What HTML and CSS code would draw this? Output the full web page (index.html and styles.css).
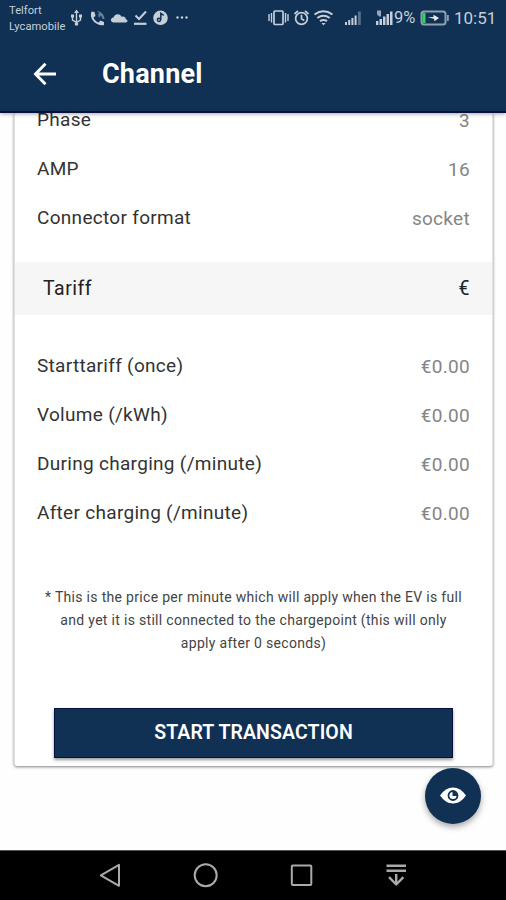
FILE: index.html
```html
<!DOCTYPE html>
<html lang="en">
<head>
<meta charset="utf-8">
<title>Channel</title>
<link rel="stylesheet" href="styles.css">
</head>
<body>
<div class="screen">
  <header class="top">
    <div class="status">
      <div class="carrier"><span>Telfort</span><span class="carrier-second">Lycamobile</span></div>
      <svg class="notifications" width="122" height="20" viewBox="0 0 122 20">
        <g fill="none" stroke="currentColor" stroke-width="1.4">
          <path d="M8.500 4v12M4.500 8v4l4 2.500 4-2.500V8"/>
          <path d="M67.500 7.500l3.500 3.500 7-7.500" stroke-width="2"/>
          <path d="M66 15.800h12.500" stroke-width="2.200"/>
        </g>
        <g fill="currentColor">
          <path d="M8.500 1.500l2.500 3.500H6zM3 6.500h3v3H3zM11 6.500h3v3h-3z"/><circle cx="8.500" cy="16" r="1.800"/>
          <path d="M23.500 3.500l3 .5 1 4-2 1.500c1 2.500 2.500 4 5 5l2-2 3.500 1.500v3c-7 1.500-15.500-5.500-12.500-13.500z"/>
          <path d="M29 3c4.500.5 7.500 4 7.500 8h-2.200c0-1.500-.5-2.600-1.300-3.500L31 10l-1-4.500h2z" opacity=".5"/>
          <path d="M46 14.500c-4 0-4-4.500-.5-5 1-4 6.500-4.500 8-.8 3-.5 4 .8 4.300 2.500 2.500.5 2 3.300-.3 3.300z"/>
          <circle cx="92.500" cy="9.800" r="7.300"/>
          <circle cx="109.500" cy="9.500" r="1.200"/><circle cx="114" cy="9.500" r="1.200"/><circle cx="118.500" cy="9.500" r="1.200"/>
        </g>
        <g fill="none" stroke="#103054" stroke-width="1.500"><circle cx="91" cy="11.800" r="1.600"/><path d="M92.800 11.800v-6.500l3 2"/></g>
      </svg>
      <svg class="radios" width="126" height="20" viewBox="0 0 126 20">
        <g fill="none" stroke="currentColor" stroke-width="1.700">
          <rect x="6" y="3" width="9" height="13.500" rx="1"/>
          <path d="M1 6v7M3.500 5v9.500M17.500 5v9.500M20 6v7" stroke-width="1.400"/>
          <circle cx="33.500" cy="10.500" r="5.900"/><path d="M33.500 6.800v4l2.800 1.700M26.500 6l3.500-3.200M40.500 6L37 2.800"/>
          <path d="M46.500 6.500q9-6.500 18 0M49.300 10q6.200-4.500 12.400 0M52 13.200q3.500-2.500 7 0" stroke-width="2.100"/>
        </g>
        <g fill="currentColor">
          <path d="M53.500 15h4l-2 2.500z"/>
          <path d="M77 14h2v3h-2zM80.200 12h2v5h-2zM83.400 10h2v7h-2zM86.600 7.500h2V17h-2z"/>
          <path d="M90 3.500h2.800V17H90z" opacity=".4"/>
          <path d="M108 13h2.400v4H108zM111.500 11h2.500v6h-2.500zM115 8.500h2.500V17H115zM118.500 6h2.500v11h-2.500zM122 3.500h2.500V17H122z"/>
          <path d="M109 2.500h4v6h-1.800l-2.200-2z" opacity=".75"/>
        </g>
      </svg>
      <span class="percent">9%</span>
      <svg class="battery" width="30" height="18" viewBox="0 0 30 18">
        <rect x="1.500" y="2.500" width="24" height="13" rx="2.500" fill="none" stroke="#8fa0b0" stroke-width="2"/>
        <path d="M2.500 4h3v10h-3z" fill="#35cf63"/><path d="M27 6h1.800v6H27z" fill="#8fa0b0"/>
        <path d="M7.500 8.200l6-.2V5.800L19 9l-4.500 3.200-.5-2.400z" fill="#e5eaf0"/>
      </svg>
      <span class="clock">10:51</span>
    </div>
    <div class="appbar">
      <svg class="back" width="24" height="24" viewBox="0 0 24 24"><path d="M23 12H3M12.500 1.800L2.500 12l10 10.200" fill="none" stroke="#fff" stroke-width="2.900"/></svg>
      <h1>Channel</h1>
    </div>
  </header>
  <main>
    <section class="card">
      <dl class="rows">
        <div><dt>Phase</dt><dd>3</dd></div>
        <div><dt>AMP</dt><dd>16</dd></div>
        <div><dt>Connector format</dt><dd>socket</dd></div>
      </dl>
      <div class="band"><span>Tariff</span><span>€</span></div>
      <dl class="rows">
        <div><dt>Starttariff (once)</dt><dd>€0.00</dd></div>
        <div><dt>Volume (/kWh)</dt><dd>€0.00</dd></div>
        <div><dt>During charging (/minute)</dt><dd>€0.00</dd></div>
        <div><dt>After charging (/minute)</dt><dd>€0.00</dd></div>
      </dl>
      <p class="note">* This is the price per minute which will apply when the EV is full<br>and yet it is still connected to the chargepoint (this will only<br>apply after 0 seconds)</p>
      <button class="start">START TRANSACTION</button>
    </section>
    <button class="fab" aria-label="View">
      <svg width="26" height="18" viewBox="0 0 26 18"><path d="M0 8.500Q5.500 .5 13 .5T26 8.500Q20.500 16.500 13 16.500T0 8.500z" fill="#fff"/><circle cx="13" cy="8.500" r="4.500" fill="#fff" stroke="#103054" stroke-width="1.800"/><path d="M12.500 5v4h4.500v-2l-2-2z" fill="#103054"/></svg>
    </button>
  </main>
  <nav>
    <svg width="24" height="26" viewBox="0 0 24 26"><path d="M21 1.800v21L2.800 12.300z"/></svg>
    <svg width="26" height="26" viewBox="0 0 26 26"><circle cx="12.700" cy="12.300" r="11"/></svg>
    <svg width="24" height="26" viewBox="0 0 24 26"><rect x="1.800" y="2.500" width="19.500" height="19.500" rx="1"/></svg>
    <svg width="22" height="26" viewBox="0 0 22 26"><path d="M1.500 2.700h19.500M1.500 7.700h19.500M11.200 11v10.500M4 14.200l7.200 7.300 7.200-7.300" stroke-width="2.400"/></svg>
  </nav>
</div>
</body>
</html>
```
FILE: styles.css
```css
* { box-sizing: border-box; }
body { margin: 0; font-family: Roboto, "Liberation Sans", sans-serif; background: #fefefe; }
h1, dl, dd, p { margin: 0; }
button { border: 0; padding: 0; font: inherit; }
svg { display: block; flex: none; }

.screen { display: flex; flex-direction: column; height: 900px; overflow: hidden; }
.top {
  z-index: 1;
  flex: none;
  height: 113px;
  background: #103054;
  border-bottom: 2px solid #07113d;
  box-shadow: 0 1px 4px rgba(0, 0, 0, .35);
}
.status { display: flex; height: 36px; color: #c5cfd9; }
.carrier { display: flex; flex-direction: column; width: 59px; margin-left: 9px; padding-top: 3px; font-size: 11.200px; line-height: 15.500px; }
.notifications { margin-top: 8px; }
.radios { margin: 8px 0 0 78px; }
.percent { width: 26px; font-size: 16.5px; line-height: 35px; }
.battery { margin-top: 9px; }
.clock { margin-left: 4px; font-size: 17px; line-height: 36px; }
.appbar { display: flex; align-items: center; height: 76px; padding-left: 33px; }
.back { margin-right: 45px; }
h1 { color: #fff; font-size: 27px; font-weight: 700; line-height: 32px; letter-spacing: .2px; }

main { position: relative; flex: 1; min-height: 0; }
.card {
  display: flow-root;
  height: 653px;
  margin: 0 13px 0 14px;
  border: solid #e2e2e2;
  border-width: 0 1px;
  border-radius: 0 0 3px 3px;
  background: #fff;
  box-shadow: 0 1px 3px rgba(0, 0, 0, .5);
}
.rows { padding: 0 22px; color: #333; font-size: 19px; letter-spacing: .3px; }
.card > .rows:first-child { margin-top: -18.500px; }
.rows div { display: flex; justify-content: space-between; height: 49.200px; line-height: 49px; }
.rows dd { padding-top: 1px; color: #858585; }
.band {
  display: flex;
  justify-content: space-between;
  height: 53px;
  margin: 20px 0 25.500px;
  padding: 0 22px 0 28px;
  background: #f6f6f6;
  color: #222;
  font-size: 19.500px;
  line-height: 54px;
  letter-spacing: .5px;
}
.note { padding-top: 49px; color: #444; font-size: 14px; line-height: 22.600px; letter-spacing: .31px; text-align: center; white-space: nowrap; }
.start {
  display: block;
  width: 399px;
  height: 50px;
  margin: 53.500px 0 0 39px;
  border: 1px solid #07113d;
  background: #103054;
  box-shadow: 0 2px 3px rgba(0, 0, 0, .4);
  color: #fff;
  font-size: 19.500px;
  font-weight: 600;
  letter-spacing: .1px;
}
.fab {
  position: absolute;
  right: 25px;
  bottom: 26px;
  display: grid;
  place-items: center;
  width: 56px;
  height: 56px;
  border-radius: 50%;
  background: #103054;
  box-shadow: 0 3px 6px rgba(0, 0, 0, .35);
}
nav {
  display: flex;
  flex: none;
  align-items: center;
  gap: 71px;
  height: 50px;
  padding-left: 98px;
  border-top: 1px solid #555;
  background: #000;
}
nav svg { fill: none; stroke: #aaa; stroke-width: 2; stroke-linejoin: round; }
```
